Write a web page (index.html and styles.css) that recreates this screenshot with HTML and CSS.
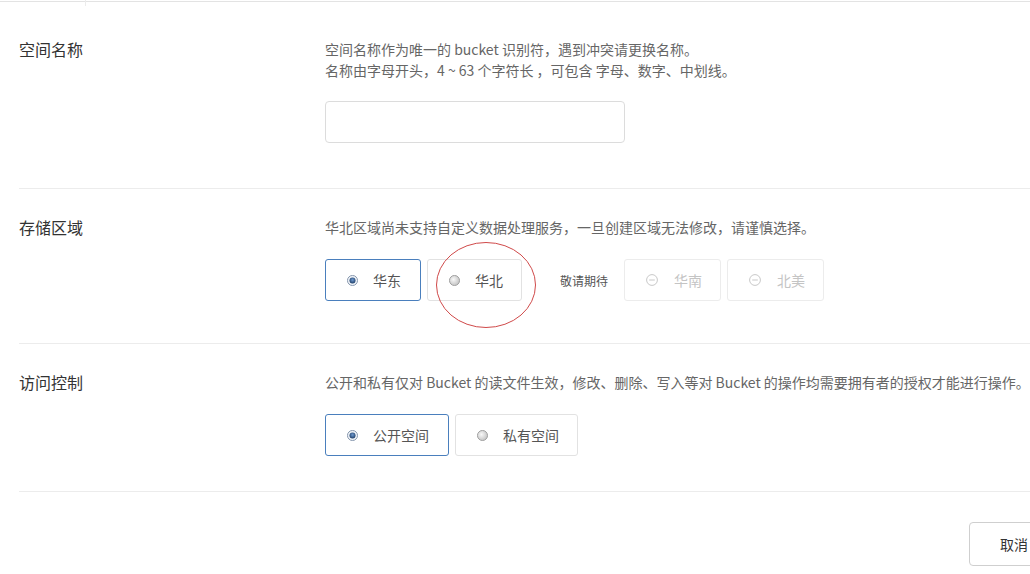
FILE: index.html
```html
<!DOCTYPE html>
<html lang="zh">
<head>
<meta charset="utf-8">
<link rel="stylesheet" href="styles.css">
</head>
<body>
<div class="page">
  <div class="topline"><span class="tick"></span></div>

  <div class="section s1">
    <div class="label">空间名称</div>
    <div class="content">
      <p class="desc">空间名称作为唯一的 bucket 识别符，遇到冲突请更换名称。<br>名称由字母开头，4 ~ 63 个字符长 ，可包含 字母、数字、中划线。</p>
      <input class="name-input" type="text">
    </div>
  </div>

  <div class="section s2">
    <div class="label">存储区域</div>
    <div class="content">
      <p class="desc">华北区域尚未支持自定义数据处理服务，一旦创建区域无法修改，请谨慎选择。</p>
      <div class="options">
        <div class="opt selected w96">
          <svg class="radio" viewBox="0 0 12 12"><defs><radialGradient id="g1" cx="0.5" cy="0.4" r="0.6"><stop offset="0" stop-color="#6f9ad0"/><stop offset="1" stop-color="#1d3c66"/></radialGradient></defs><circle cx="6" cy="6" r="5.5" fill="#eef2f7" stroke="#7f91a8"/><circle cx="6" cy="6" r="3.3" fill="url(#g1)"/></svg>
          <span>华东</span>
        </div>
        <div class="opt w95">
          <svg class="radio" viewBox="0 0 12 12"><defs><radialGradient id="g2" cx="0.4" cy="0.4" r="0.7"><stop offset="0" stop-color="#f8f8f8"/><stop offset="1" stop-color="#bdbdbd"/></radialGradient></defs><circle cx="6" cy="6" r="5.5" fill="url(#g2)" stroke="#9a9a9a"/></svg>
          <span>华北</span>
        </div>
        <span class="soon">敬请期待</span>
        <div class="opt disabled w97">
          <svg class="radio" viewBox="0 0 12 12"><circle cx="6" cy="6" r="5.4" fill="none" stroke="#c8c8c8"/><line x1="3.2" y1="6" x2="8.8" y2="6" stroke="#c8c8c8"/></svg>
          <span>华南</span>
        </div>
        <div class="opt disabled w97">
          <svg class="radio" viewBox="0 0 12 12"><circle cx="6" cy="6" r="5.4" fill="none" stroke="#c8c8c8"/><line x1="3.2" y1="6" x2="8.8" y2="6" stroke="#c8c8c8"/></svg>
          <span>北美</span>
        </div>
      </div>
    </div>
    <svg class="annot" viewBox="0 0 102 88"><ellipse cx="51" cy="44" rx="49.5" ry="42.5" fill="none" stroke="#d04a4a" stroke-width="1"/></svg>
  </div>

  <div class="section s3">
    <div class="label">访问控制</div>
    <div class="content">
      <p class="desc">公开和私有仅对 Bucket 的读文件生效，修改、删除、写入等对 Bucket 的操作均需要拥有者的授权才能进行操作。</p>
      <div class="options">
        <div class="opt selected w124">
          <svg class="radio" viewBox="0 0 12 12"><circle cx="6" cy="6" r="5.5" fill="#eef2f7" stroke="#7f91a8"/><circle cx="6" cy="6" r="3.3" fill="url(#g1)"/></svg>
          <span>公开空间</span>
        </div>
        <div class="opt w123">
          <svg class="radio" viewBox="0 0 12 12"><circle cx="6" cy="6" r="5.5" fill="url(#g2)" stroke="#9a9a9a"/></svg>
          <span>私有空间</span>
        </div>
      </div>
    </div>
  </div>

  <div class="footer">
    <button class="btn-cancel" type="button">取消</button>
  </div>
</div>
</body>
</html>
```

FILE: styles.css
```css
html, body {
  margin: 0;
  padding: 0;
  overflow: hidden;
  background: #fff;
}
body {
  font-family: "Noto Sans CJK SC", "Microsoft YaHei", "Noto Sans", sans-serif;
  color: #333;
}
.page {
  width: 1090px;
}
.topline {
  position: relative;
  height: 1px;
  margin-top: 1px;
  background: #e3e3e3;
}
.tick {
  position: absolute;
  left: 85px;
  top: -1px;
  width: 1px;
  height: 6px;
  background: #ececec;
}
.section {
  position: relative;
  display: flex;
  margin-left: 19px;
  border-bottom: 1px solid #ececec;
}
.label {
  width: 306px;
  flex: none;
  font-size: 16px;
  line-height: 21px;
  color: #333;
}
.content {
  flex: 1;
}
.desc {
  margin: 0;
  font-size: 14px;
  line-height: 21px;
  color: #666;
  white-space: nowrap;
}
.s1 {
  padding-top: 37px;
  padding-bottom: 45px;
}
.s2 {
  padding-top: 28px;
  padding-bottom: 42px;
}
.s3 {
  padding-top: 28px;
  padding-bottom: 35px;
}
.name-input {
  display: block;
  box-sizing: border-box;
  margin-top: 20px;
  width: 300px;
  height: 42px;
  border: 1px solid #dcdcdc;
  border-radius: 4px;
  background: #fff;
  outline: none;
}
.options {
  display: flex;
  align-items: center;
  gap: 6px;
  margin-top: 21px;
}
.opt {
  box-sizing: border-box;
  height: 42px;
  display: flex;
  align-items: center;
  padding-left: 21px;
  border: 1px solid #e2e2e2;
  border-radius: 3px;
  font-size: 14px;
  color: #555;
  background: #fff;
}
.opt .radio {
  width: 11px;
  height: 11px;
  flex: none;
  margin-right: 15px;
}
.opt.selected {
  border-color: #4a7fbd;
}
.opt.disabled {
  border-color: #ececec;
  color: #c4c4c4;
}
.opt.disabled .radio {
  width: 12px;
  height: 12px;
  margin-right: 16px;
}
.w96 { width: 96px; }
.w95 { width: 95px; }
.w97 { width: 97px; }
.w124 { width: 124px; }
.w123 { width: 123px; }
.soon {
  font-size: 12px;
  color: #555;
  margin-left: 32px;
  margin-right: 10px;
}
.annot {
  position: absolute;
  left: 416px;
  top: 52px;
  width: 102px;
  height: 88px;
  pointer-events: none;
}
.footer {
  display: flex;
  justify-content: flex-end;
  padding-top: 30px;
  padding-right: 30px;
}
.btn-cancel {
  box-sizing: border-box;
  width: 91px;
  height: 44px;
  border: 1px solid #cfcfcf;
  border-radius: 4px;
  background: #fff;
  font-family: "Noto Sans CJK SC", "Microsoft YaHei", sans-serif;
  font-size: 14px;
  color: #333;
  text-align: left;
  padding-left: 30px;
}
```
